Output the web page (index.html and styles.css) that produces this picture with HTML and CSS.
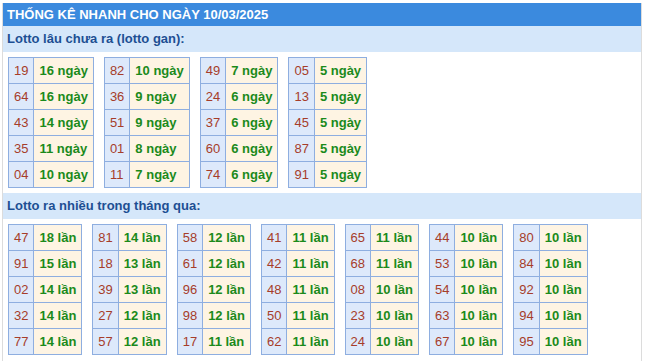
FILE: index.html
```html
<!DOCTYPE html>
<html lang="vi">
<head>
<meta charset="utf-8">
<title>Thống kê nhanh</title>
<link rel="stylesheet" href="styles.css">
</head>
<body>
<div class="box">
  <div class="title">THỐNG KÊ NHANH CHO NGÀY 10/03/2025</div>
  <div class="sub">Lotto lâu chưa ra (lotto gan):</div>
  <div class="tables">
    <table class="t"><tbody>
      <tr><td class="n">19</td><td class="v">16 ngày</td></tr>
      <tr><td class="n">64</td><td class="v">16 ngày</td></tr>
      <tr><td class="n">43</td><td class="v">14 ngày</td></tr>
      <tr><td class="n">35</td><td class="v">11 ngày</td></tr>
      <tr><td class="n">04</td><td class="v">10 ngày</td></tr>
    </tbody></table>
    <table class="t"><tbody>
      <tr><td class="n">82</td><td class="v">10 ngày</td></tr>
      <tr><td class="n">36</td><td class="v">9 ngày</td></tr>
      <tr><td class="n">51</td><td class="v">9 ngày</td></tr>
      <tr><td class="n">01</td><td class="v">8 ngày</td></tr>
      <tr><td class="n">11</td><td class="v">7 ngày</td></tr>
    </tbody></table>
    <table class="t"><tbody>
      <tr><td class="n">49</td><td class="v">7 ngày</td></tr>
      <tr><td class="n">24</td><td class="v">6 ngày</td></tr>
      <tr><td class="n">37</td><td class="v">6 ngày</td></tr>
      <tr><td class="n">60</td><td class="v">6 ngày</td></tr>
      <tr><td class="n">74</td><td class="v">6 ngày</td></tr>
    </tbody></table>
    <table class="t"><tbody>
      <tr><td class="n">05</td><td class="v">5 ngày</td></tr>
      <tr><td class="n">13</td><td class="v">5 ngày</td></tr>
      <tr><td class="n">45</td><td class="v">5 ngày</td></tr>
      <tr><td class="n">87</td><td class="v">5 ngày</td></tr>
      <tr><td class="n">91</td><td class="v">5 ngày</td></tr>
    </tbody></table>
  </div>
  <div class="sub">Lotto ra nhiều trong tháng qua:</div>
  <div class="tables">
    <table class="t"><tbody>
      <tr><td class="n">47</td><td class="v">18 lần</td></tr>
      <tr><td class="n">91</td><td class="v">15 lần</td></tr>
      <tr><td class="n">02</td><td class="v">14 lần</td></tr>
      <tr><td class="n">32</td><td class="v">14 lần</td></tr>
      <tr><td class="n">77</td><td class="v">14 lần</td></tr>
    </tbody></table>
    <table class="t"><tbody>
      <tr><td class="n">81</td><td class="v">14 lần</td></tr>
      <tr><td class="n">18</td><td class="v">13 lần</td></tr>
      <tr><td class="n">39</td><td class="v">13 lần</td></tr>
      <tr><td class="n">27</td><td class="v">12 lần</td></tr>
      <tr><td class="n">57</td><td class="v">12 lần</td></tr>
    </tbody></table>
    <table class="t"><tbody>
      <tr><td class="n">58</td><td class="v">12 lần</td></tr>
      <tr><td class="n">61</td><td class="v">12 lần</td></tr>
      <tr><td class="n">96</td><td class="v">12 lần</td></tr>
      <tr><td class="n">98</td><td class="v">12 lần</td></tr>
      <tr><td class="n">17</td><td class="v">11 lần</td></tr>
    </tbody></table>
    <table class="t"><tbody>
      <tr><td class="n">41</td><td class="v">11 lần</td></tr>
      <tr><td class="n">42</td><td class="v">11 lần</td></tr>
      <tr><td class="n">48</td><td class="v">11 lần</td></tr>
      <tr><td class="n">50</td><td class="v">11 lần</td></tr>
      <tr><td class="n">62</td><td class="v">11 lần</td></tr>
    </tbody></table>
    <table class="t"><tbody>
      <tr><td class="n">65</td><td class="v">11 lần</td></tr>
      <tr><td class="n">68</td><td class="v">11 lần</td></tr>
      <tr><td class="n">08</td><td class="v">10 lần</td></tr>
      <tr><td class="n">23</td><td class="v">10 lần</td></tr>
      <tr><td class="n">24</td><td class="v">10 lần</td></tr>
    </tbody></table>
    <table class="t"><tbody>
      <tr><td class="n">44</td><td class="v">10 lần</td></tr>
      <tr><td class="n">53</td><td class="v">10 lần</td></tr>
      <tr><td class="n">54</td><td class="v">10 lần</td></tr>
      <tr><td class="n">63</td><td class="v">10 lần</td></tr>
      <tr><td class="n">67</td><td class="v">10 lần</td></tr>
    </tbody></table>
    <table class="t"><tbody>
      <tr><td class="n">80</td><td class="v">10 lần</td></tr>
      <tr><td class="n">84</td><td class="v">10 lần</td></tr>
      <tr><td class="n">92</td><td class="v">10 lần</td></tr>
      <tr><td class="n">94</td><td class="v">10 lần</td></tr>
      <tr><td class="n">95</td><td class="v">10 lần</td></tr>
    </tbody></table>
  </div>
</div>
</body>
</html>
```

FILE: styles.css
```css
html, body {
  margin: 0;
  padding: 0;
  background: #ffffff;
}
body {
  font-family: "Liberation Sans", Arial, sans-serif;
  font-size: 13px;
}
.box {
  margin: 3px 0 0 2px;
  width: 638px;
  border-left: 1px solid #dcdcdc;
  border-right: 1px solid #dcdcdc;
  min-height: 360px;
}
.title {
  background: #3b8ade;
  color: #ffffff;
  font-weight: bold;
  height: 23px;
  line-height: 23px;
  padding-left: 4px;
}
.sub {
  background: #d5e7fa;
  color: #1d4f93;
  font-weight: bold;
  height: 26px;
  line-height: 26px;
  padding-left: 4px;
}
.tables {
  display: flex;
  align-items: flex-start;
  gap: 10px;
  padding: 5px 0 5px 5px;
}
.t {
  border-collapse: collapse;
}
.t td {
  border: 1px solid #8eaee0;
  height: 25px;
  padding: 0 5px;
  white-space: nowrap;
}
.n {
  background: #dde9fb;
  color: #a63d2a;
}
.v {
  background: #fef4e3;
  color: #1b8a1b;
  font-weight: bold;
}
```
